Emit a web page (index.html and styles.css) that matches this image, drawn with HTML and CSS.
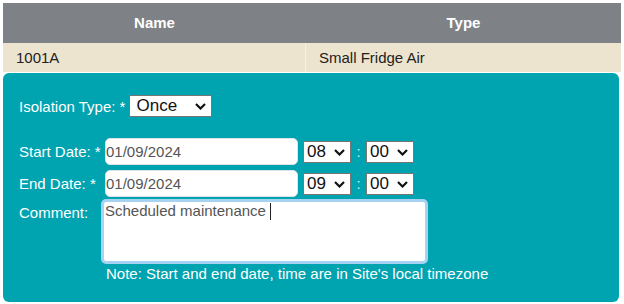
FILE: index.html
```html
<!DOCTYPE html>
<html lang="en">
<head>
    <meta charset="UTF-8">
    <meta name="viewport" content="width=device-width, initial-scale=1.0">
    <title>Isolation</title>
    <link rel="stylesheet" href="styles.css">
</head>
<body>
    <div class="asset-table">
        <div class="th">Name</div>
        <div class="th">Type</div>
        <div class="td">1001A</div>
        <div class="td td-last">Small Fridge Air</div>
    </div>

    <!-- isolation form panel -->
    <form class="iso-panel" id="isolation-form">
        <div class="iso-type">
            <label for="isoType">Isolation Type: *</label>
            <span class="sel-wrap">
                <select id="isoType" class="sel sel-wide"><option>Once</option></select>
                <svg class="chev" width="11" height="7" viewBox="0 0 11 7"><polyline points="1,1 5.5,5.5 10,1" fill="none" stroke="#111" stroke-width="2.2"/></svg>
            </span>
        </div>

        <div class="field-row">
            <label class="field-label" for="startDate">Start Date: *</label>
            <input class="date-input" id="startDate" type="text" value="01/09/2024">
            <span class="sel-wrap">
                <select class="sel"><option>08</option></select>
                <svg class="chev" width="11" height="7" viewBox="0 0 11 7"><polyline points="1,1 5.5,5.5 10,1" fill="none" stroke="#111" stroke-width="2.2"/></svg>
            </span>
            <span class="colon">:</span>
            <span class="sel-wrap">
                <select class="sel"><option>00</option></select>
                <svg class="chev" width="11" height="7" viewBox="0 0 11 7"><polyline points="1,1 5.5,5.5 10,1" fill="none" stroke="#111" stroke-width="2.2"/></svg>
            </span>
        </div>
        <div class="field-row">
            <label class="field-label" for="endDate">End Date: *</label>
            <input class="date-input" id="endDate" type="text" value="01/09/2024">
            <span class="sel-wrap">
                <select class="sel"><option>09</option></select>
                <svg class="chev" width="11" height="7" viewBox="0 0 11 7"><polyline points="1,1 5.5,5.5 10,1" fill="none" stroke="#111" stroke-width="2.2"/></svg>
            </span>
            <span class="colon">:</span>
            <span class="sel-wrap">
                <select class="sel"><option>00</option></select>
                <svg class="chev" width="11" height="7" viewBox="0 0 11 7"><polyline points="1,1 5.5,5.5 10,1" fill="none" stroke="#111" stroke-width="2.2"/></svg>
            </span>
        </div>
        <div class="field-row comment-row">
            <label class="field-label comment-label">Comment:</label>
            <div class="comment-box">Scheduled maintenance <span class="caret"></span></div>
        </div>
        <p class="note">Note: Start and end date, time are in Site's local timezone</p>
    </form>
</body>
</html>
```

FILE: styles.css
```css
body { margin: 3px; font-family: "Liberation Sans", Arial, sans-serif; font-size: 15px; background: #fff; }

.asset-table { display: grid; grid-template-columns: 303px 1fr; }
.th { height: 40px; line-height: 40px; background: #7e8185; color: #fff; font-weight: bold; font-size: 15px; text-align: center; }
.td { height: 29px; line-height: 29px; background: #ede4cf; color: #222; padding-left: 13px; border-right: 1px solid #f6f1e6; }
.td-last { border-right: none; padding-left: 13px; }

.iso-panel { margin: 1px 2px 0 0; padding: 22px 16px 19px; background: #00a3b0; border-radius: 6px; color: #fff; }
.iso-type { display: flex; align-items: center; gap: 4px; height: 22px; margin-bottom: 21px; }

.sel-wrap { position: relative; display: inline-flex; }
.sel { appearance: none; -webkit-appearance: none; height: 22px; width: 48px; box-sizing: border-box; border: 1px solid #767676; border-radius: 0; background: #fff; color: #111; font-family: inherit; font-size: 17px; padding: 0 0 0 3px; line-height: 20px; }
.sel-wide { width: 83px; padding-left: 6px; }
.chev { position: absolute; right: 6px; top: 8px; pointer-events: none; }

.field-row { display: flex; align-items: center; margin-bottom: 5px; }
.field-label { width: 86px; }
.date-input { width: 193px; height: 27px; box-sizing: border-box; border: 1px solid #dde3e6; border-radius: 5px; padding: 0 1px 0 0; font-family: inherit; font-size: 15px; color: #555; margin-right: 5px; }
.colon { width: 15px; text-align: center; color: #cfeef1; }

.comment-row { align-items: flex-start; margin-top: -3px; margin-bottom: 0; }
.comment-label { width: 82px; padding-top: 5px; }
.comment-box { width: 327px; height: 65px; box-sizing: border-box; border: 3px solid #a7d3f3; border-radius: 5px; background: #fff; color: #555; padding: 0 1px; line-height: 17px; }
.caret { display: inline-block; width: 1px; height: 17px; background: #222; vertical-align: -4px; }

.note { margin: 1px 0 0 87px; line-height: 18px; }
```
